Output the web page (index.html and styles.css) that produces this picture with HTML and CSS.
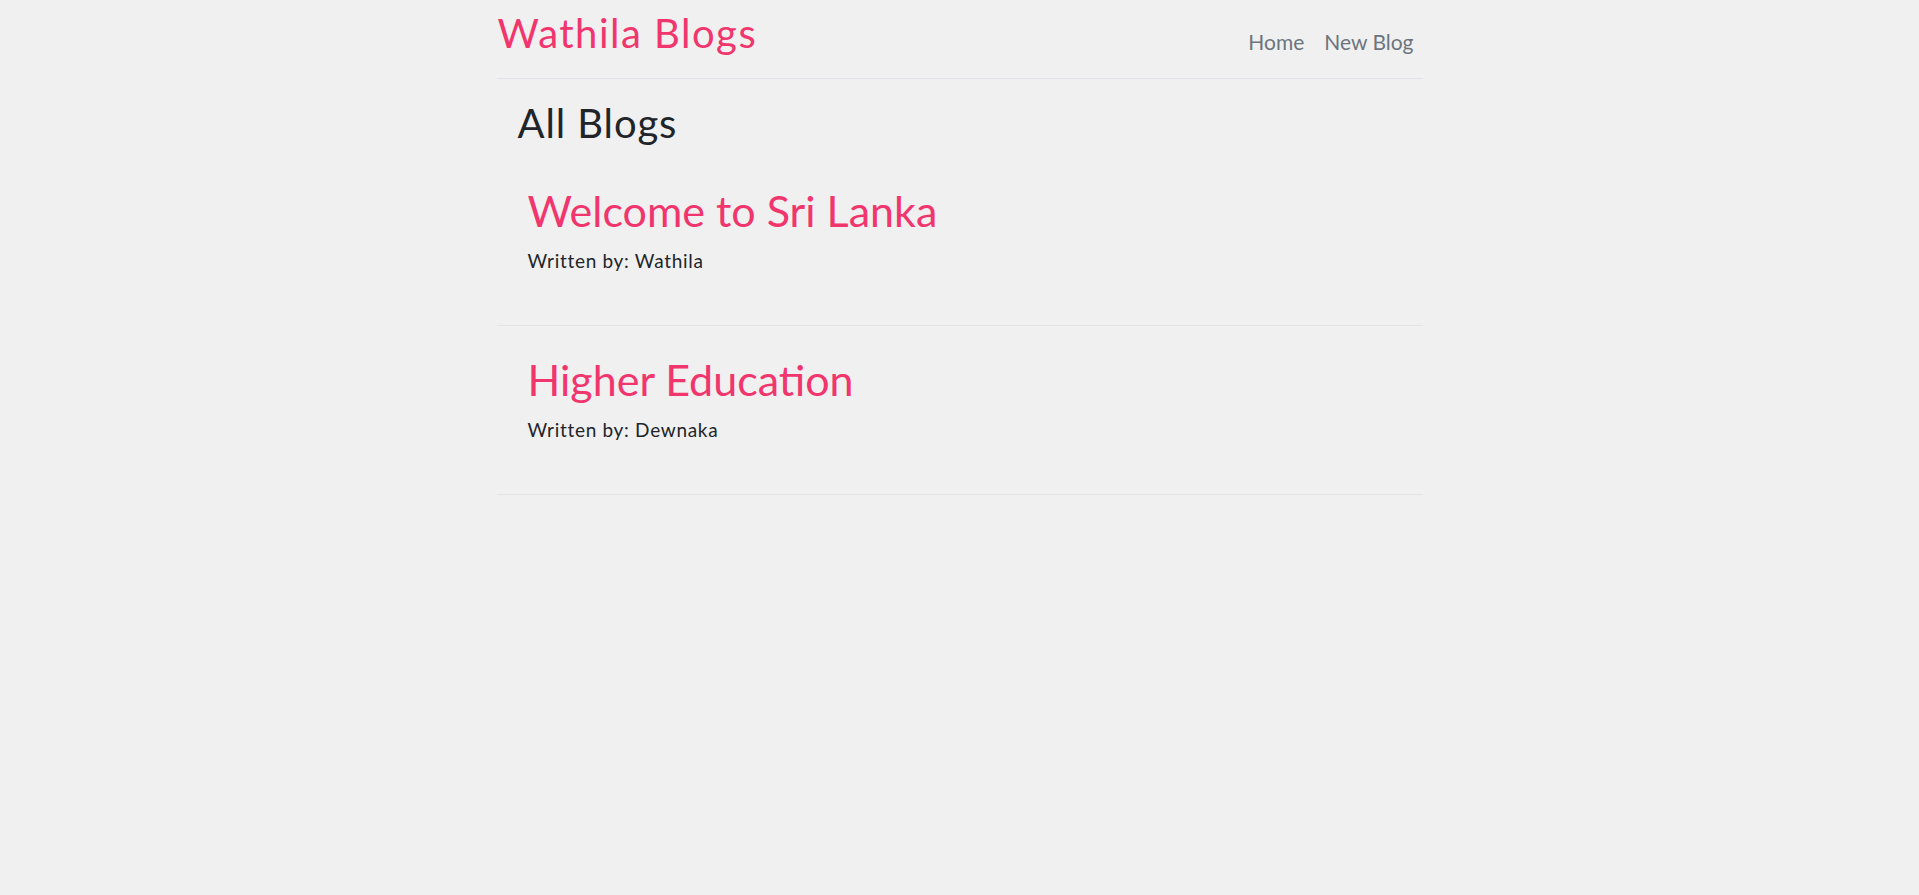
FILE: index.html
```html
<!DOCTYPE html>
<html lang="en">
<head>
<meta charset="utf-8">
<title>Wathila Blogs</title>
<link rel="stylesheet" href="styles.css">
</head>
<body>
<div class="page">
  <nav class="navbar">
    <h1 class="brand">Wathila Blogs</h1>
    <div class="links">
      <a href="#">Home</a>
      <a href="#">New Blog</a>
    </div>
  </nav>
  <main class="content">
    <h1 class="heading">All Blogs</h1>
    <div class="blog-list">
      <div class="blog-preview">
        <h2 class="blog-title">Welcome to Sri Lanka</h2>
        <p class="blog-author">Written by: Wathila</p>
      </div>
      <div class="blog-preview">
        <h2 class="blog-title">Higher Education</h2>
        <p class="blog-author">Written by: Dewnaka</p>
      </div>
    </div>
  </main>
</div>
</body>
</html>
```

FILE: styles.css
```css
* {
  margin: 0;
  box-sizing: border-box;
}

body {
  margin: 0;
  background: #f0f0f0;
  font-family: Lato, "Open Sans", sans-serif;
  color: #212529;
}

.page {
  max-width: 926px;
  margin: 0 auto;
}

.navbar {
  display: flex;
  align-items: flex-start;
  padding: 9px 0 21px 1px;
  border-bottom: 1px solid #dee2e6;
}

.brand {
  font-size: 40px;
  font-weight: 400;
  line-height: 48px;
  letter-spacing: 1.5px;
  color: #f1356d;
}

.links {
  margin-left: auto;
  margin-top: 20px;
  display: flex;
  gap: 20px;
  padding-right: 9px;
}

.links a {
  font-size: 21px;
  line-height: 25px;
  color: #6c757d;
  text-decoration: none;
}

.content {
  padding-top: 20px;
}

.heading {
  font-size: 40px;
  font-weight: 400;
  line-height: 48px;
  letter-spacing: 0.9px;
  padding-left: 21px;
  color: #212529;
  margin-bottom: 10px;
}

.blog-preview {
  padding: 28px 30px 53px 31px;
  border-bottom: 1px solid #e2e3e6;
}

.blog-title {
  font-size: 43px;
  font-weight: 400;
  line-height: 52px;
  color: #f1356d;
  margin-bottom: 12px;
}

.blog-author {
  font-size: 19px;
  line-height: 23px;
  letter-spacing: 0.7px;
  color: #212529;
}
```
